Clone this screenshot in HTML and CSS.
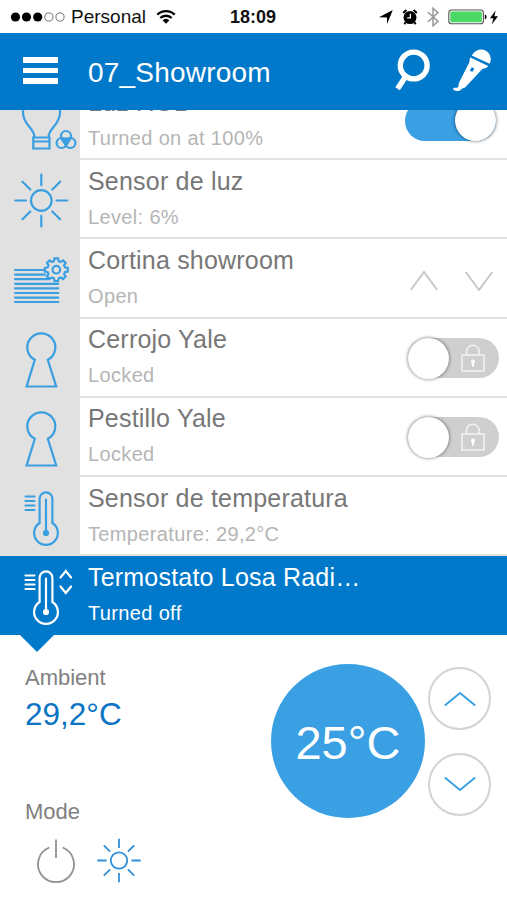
FILE: index.html
```html
<!DOCTYPE html>
<html lang="es">

<head>
  <meta charset="UTF-8">
  <meta name="viewport" content="width=device-width, initial-scale=1.0">
  <title>07_Showroom</title>
  <link rel="stylesheet" href="styles.css">
</head>

<body>
  <div class="status-bar">
    <div class="carrier">
      <svg class="signal" width="56" height="12" viewBox="0 0 56 12">
        <circle cx="5.5" cy="6" r="4.6" />
        <circle cx="16.5" cy="6" r="4.6" />
        <circle cx="27.7" cy="6" r="4.6" />
        <circle class="empty" cx="38.9" cy="6" r="4.1" />
        <circle class="empty" cx="50" cy="6" r="4.1" />
      </svg>
      <span class="carrier-name">Personal</span>
      <svg class="wifi" width="20" height="16" viewBox="0 0 20 16">
        <path class="arc" d="M1.3 5.6a12.6 12.6 0 0 1 17.4 0M4.3 9a8.3 8.3 0 0 1 11.4 0" />
        <path d="M6.6 11.3a5 5 0 0 1 6.8 0L10 14.8z" />
      </svg>
    </div>
    <span class="clock">18:09</span>
    <div class="indicators">
      <svg width="14" height="16" viewBox="0 0 14 16"><path d="M0 8.3L13.8 1 8 15V8.6z" /></svg>
      <svg width="16" height="18" viewBox="0 0 16 18">
        <circle cx="8" cy="9.6" r="6.5" />
        <path class="alarm-bells" d="M1.2 5l3.2-3M14.8 5l-3.2-3M3.6 14.5l-1.3 1.6M12.4 14.5l1.3 1.6" />
        <path class="alarm-hands" d="M8.4 5.8v4H5.2" />
      </svg>
      <svg width="12" height="20" viewBox="0 0 12 20"><path class="bluetooth" d="M.8 5l10.2 9.4-5 4.4V1.2l5 4.4L.8 15" /></svg>
      <svg width="39" height="16" viewBox="0 0 39 16">
        <rect class="battery" x=".8" y="1" width="34.6" height="13.8" rx="2.8" />
        <rect class="charge" x="2.3" y="2.5" width="31.6" height="10.8" rx="1.2" />
        <path d="M36.8 5.5c2.3.6 2.3 4.2 0 4.8z" />
      </svg>
      <svg width="8" height="15" viewBox="0 0 8 15"><path d="M5.6.4L0 8.2h3.4L1.8 14.4 8 6.3H4.4z" /></svg>
    </div>
  </div>

  <header class="header">
    <div class="menu">
      <span></span>
      <span></span>
      <span></span>
    </div>
    <h1>07_Showroom</h1>
    <svg class="search" width="40" height="46" viewBox="0 0 40 46">
      <circle cx="20.7" cy="17.5" r="13.4" />
      <path d="M12.8 28.2L4.6 40.8" />
    </svg>
    <svg class="mic" width="40" height="46" viewBox="0 0 40 46">
      <path d="M18.8 7.4C22 1.800 28 .3 32 2.200c5.500 2.600 7.100 8.600 4.700 13.600z" />
      <path fill-rule="evenodd" d="M17.400 9.400L35.200 18c-.8 1.500-3 2.500-5.600 2.700L12.300 39.200c-1 1-2.300.9-3 1.300-1.200.8-1.600 2.600-5.200 2.400C1.800 42.900.2 42 .2 41c0-1.300 1.200-1.500 3-1.300 2 .2 2.300-.8 2.300-2.200 0-1.500.4-2.500 1-3.700L16.500 14c0-1.600.1-3.200.9-4.600zM18.800 19.200l-2 3.400 2.500 1.400 2-3.400z" />
    </svg>
  </header>

  <main>
    <div class="device-list">
      <div class="device">
        <svg class="device-icon" viewBox="0 0 80 79">
          <path d="M33.300 56.500v11h16.200v-11zM33.300 60.500h16.200M34.500 56.500c0-10-11.500-12-11.500-25a18.500 18.500 0 0 1 37 0c0 13-11.500 15-11.500 25" />
          <circle cx="66" cy="55" r="5" />
          <circle cx="61.600" cy="62" r="5" />
          <circle cx="70.400" cy="62" r="5" />
          <path class="solid" d="M61.500 57.500h9L66 64.500z" />
        </svg>
        <div class="device-body">
          <div class="device-text">
            <div class="name">Luz RGB</div>
            <div class="state">Turned on at 100%</div>
          </div>
          <div class="toggle on"><span class="knob"></span></div>
        </div>
      </div>

      <div class="device">
        <svg class="device-icon" viewBox="0 0 80 79">
          <circle cx="41.300" cy="40.500" r="10.300" />
          <path d="M41.300 14.500v10.700M41.300 55.800V66.500M15.300 40.500H26M56.600 40.500h10.700M22.500 21.700l7.800 7.800M60.100 21.700l-7.800 7.800M22.500 59.300l7.800-7.800M60.100 59.300l-7.800-7.800" />
        </svg>
        <div class="device-body">
          <div class="device-text">
            <div class="name">Sensor de luz</div>
            <div class="state">Level: 6%</div>
          </div>
        </div>
      </div>

      <div class="device">
        <svg class="device-icon" viewBox="0 0 80 79">
          <path d="M15 31H44M15 35.600H45M15 40.200H48M15 44.800h43.300M15 49.400h43.300M15 54h43.300M15 58.600h43.300M15 63h43.300" />
          <path d="M54.500 19.300h3.600l.6 2.800 2 .8 2.400-1.500 2.500 2.500-1.500 2.400.8 2 2.800.6v3.600l-2.800.6-.8 2 1.500 2.400-2.500 2.500-2.400-1.500-2 .8-.6 2.800h-3.600l-.6-2.800-2-.8-2.400 1.500-2.500-2.500 1.500-2.400-.8-2-2.800-.6v-3.600l2.800-.6.8-2-1.500-2.400 2.500-2.500 2.400 1.500 2-.8z" />
          <circle cx="56.300" cy="30.700" r="3.800" />
        </svg>
        <div class="device-body">
          <div class="device-text">
            <div class="name">Cortina showroom</div>
            <div class="state">Open</div>
          </div>
          <div class="blinds">
            <svg width="28" height="20" viewBox="0 0 28 20"><path d="M.7 19L14 1l13.300 18" /></svg>
            <svg width="28" height="20" viewBox="0 0 28 20"><path d="M.7 1L14 19 27.300 1" /></svg>
          </div>
        </div>
      </div>

      <div class="device">
        <svg class="device-icon" viewBox="0 0 80 79">
          <path d="M34.800 40.800a14 14 0 1 1 13 0l8.400 26.700H26.600z" />
        </svg>
        <div class="device-body">
          <div class="device-text">
            <div class="name">Cerrojo Yale</div>
            <div class="state">Locked</div>
          </div>
          <div class="toggle">
            <span class="knob"></span>
            <svg class="lock" width="24" height="28" viewBox="0 0 24 28">
              <path d="M1 11h22v16H1zM5.500 11V7.500a6.300 6.300 0 0 1 12.600 0V11" />
              <path class="keyhole" d="M10 17.500a2 2 0 0 1 4 0c0 1-.7 1.500-.9 2.300l-.3 3h-1.600l-.3-3c-.2-.8-.9-1.300-.9-2.300z" />
            </svg>
          </div>
        </div>
      </div>

      <div class="device">
        <svg class="device-icon" viewBox="0 0 80 79">
          <path d="M34.800 40.800a14 14 0 1 1 13 0l8.400 26.700H26.600z" />
        </svg>
        <div class="device-body">
          <div class="device-text">
            <div class="name">Pestillo Yale</div>
            <div class="state">Locked</div>
          </div>
          <div class="toggle">
            <span class="knob"></span>
            <svg class="lock" width="24" height="28" viewBox="0 0 24 28">
              <path d="M1 11h22v16H1zM5.500 11V7.500a6.300 6.300 0 0 1 12.600 0V11" />
              <path class="keyhole" d="M10 17.500a2 2 0 0 1 4 0c0 1-.7 1.500-.9 2.300l-.3 3h-1.600l-.3-3c-.2-.8-.9-1.300-.9-2.300z" />
            </svg>
          </div>
        </div>
      </div>

      <div class="device">
        <svg class="device-icon" viewBox="0 0 80 79">
          <path d="M39.600 46V21.800a6.400 6.400 0 0 1 12.800 0V46a11.900 11.900 0 1 1-12.800 0zM46 22.500V56M25.500 19.500h9M25.500 24h9M25.500 28.500h9M25.500 33h9" />
          <circle class="solid" cx="46" cy="56" r="2" />
        </svg>
        <div class="device-body">
          <div class="device-text">
            <div class="name">Sensor de temperatura</div>
            <div class="state">Temperature: 29,2°C</div>
          </div>
        </div>
      </div>

      <div class="device selected">
        <svg class="device-icon" viewBox="0 0 80 79">
          <path d="M39.600 46V21.800a6.400 6.400 0 0 1 12.800 0V46a11.900 11.900 0 1 1-12.800 0zM46 22.500V56M25.500 19.500h9M25.500 24h9M25.500 28.500h9M25.500 33h9M60.500 21.500l5.300-6.500 5.300 6.500M60.500 30.500l5.300 6.500 5.300-6.500" />
          <circle class="solid" cx="46" cy="56" r="2" />
        </svg>
        <div class="device-body">
          <div class="device-text">
            <div class="name">Termostato Losa Radi…</div>
            <div class="state">Turned off</div>
          </div>
        </div>
      </div>
    </div>

    <section class="thermostat">
      <div class="readings">
        <div class="label">Ambient</div>
        <div class="ambient">29,2°C</div>
        <div class="label mode-label">Mode</div>
        <div class="modes">
          <svg class="power" width="40" height="48" viewBox="0 0 40 48">
            <path d="M20 2.500v18.500M13.300 10.500a18 18 0 1 0 13.400 0" />
          </svg>
          <svg class="heat" width="46" height="48" viewBox="0 0 46 48">
            <circle cx="23" cy="23.500" r="8.200" />
            <path d="M23 1.800v9.200M23 36v9.200M1.300 23.500h9.200M35.500 23.500h9.200M7.800 8.300l6.300 6.300M38.200 8.300l-6.300 6.300M7.800 38.700l6.300-6.300M38.200 38.700l-6.300-6.300" />
          </svg>
        </div>
      </div>
      <div class="setpoint">25°C</div>
      <div class="steps">
        <button class="step"><svg width="32" height="16" viewBox="0 0 32 16"><path d="M.8 14.500L16 2l15.200 12.500" /></svg></button>
        <button class="step"><svg width="32" height="16" viewBox="0 0 32 16"><path d="M.8 1.500L16 14 31.200 1.500" /></svg></button>
      </div>
    </section>
  </main>
</body>
</html>
```

FILE: styles.css
```css
* {
  box-sizing: border-box;
}

body {
  width: 507px;
  height: 900px;
  margin: 0;
  overflow: hidden;
  background-color: #fff;
  font-family: "Liberation Sans", Arial, sans-serif;
}

svg {
  display: block;
  flex: none;
}

/* status bar */
.status-bar {
  display: grid;
  grid-template-columns: 230px 1fr auto;
  align-items: center;
  height: 33px;
  padding: 1px 9px 0 0;
  color: #111;
}

.carrier {
  display: flex;
  align-items: center;
  padding-left: 10px;
}

.signal .empty {
  fill: none;
  stroke: #777;
}

.carrier-name {
  margin-left: 5px;
  font-size: 19px;
}

.wifi {
  margin-left: 10px;
}

.wifi .arc {
  fill: none;
  stroke: #000;
  stroke-width: 2.4;
}

.clock {
  font-size: 18px;
  font-weight: bold;
}

.indicators {
  display: flex;
  align-items: center;
}

.indicators svg {
  margin-left: 9px;
}

.indicators svg:last-child {
  margin-left: 3px;
}

.alarm-bells {
  stroke: #000;
  stroke-width: 2;
}

.alarm-hands {
  fill: none;
  stroke: #fff;
  stroke-width: 1.3;
}

.bluetooth {
  fill: none;
  stroke: #999;
  stroke-width: 1.5;
}

.battery {
  fill: #fff;
  stroke: #555;
  stroke-width: 1.1;
}

.charge {
  fill: #4cd864;
}

/* header */
.header {
  display: flex;
  align-items: center;
  height: 77px;
  padding: 0 14px 0 23px;
  background-color: #0079ca;
  color: #fff;
}

.menu {
  display: flex;
  flex-direction: column;
  gap: 5px;
  width: 35px;
  margin-top: -2px;
}

.menu span {
  height: 5.5px;
  background-color: #fff;
}

.header h1 {
  flex: 1;
  margin: 2px 0 0 30px;
  font-size: 28px;
  font-weight: normal;
  letter-spacing: 0.2px;
}

.search {
  margin-right: 20px;
  fill: none;
  stroke: #fff;
  stroke-width: 5.4;
}

.mic {
  fill: #fff;
}

.search,
.mic {
  margin-top: -1px;
}

/* devices */
.device-list {
  display: flex;
  flex-direction: column;
  justify-content: flex-end;
  height: 525.4px;
  overflow: hidden;
}

.device {
  display: flex;
  flex: none;
  height: 79.2px;
  background-color: #e1e1e1;
}

.device-icon {
  width: 80px;
  height: 79px;
  fill: none;
  stroke: #3a9fe0;
  stroke-width: 2.2;
  stroke-linecap: round;
}

.device-icon .solid {
  fill: #3a9fe0;
}

.device-body {
  display: flex;
  flex: 1;
  align-items: center;
  padding-left: 8px;
  border-bottom: 2px solid #e1e1e1;
  background-color: #fff;
}

.device-text {
  flex: 1;
  align-self: flex-start;
  padding-top: 5.6px;
  white-space: nowrap;
}

.name {
  color: #777;
  font-size: 25px;
  line-height: 30px;
  letter-spacing: 0.2px;
}

.state {
  margin-top: 8px;
  color: #b5b5b5;
  font-size: 20px;
  line-height: 26px;
  letter-spacing: 0.35px;
}

.selected,
.selected .device-body {
  border-color: #0079ca;
  background-color: #0079ca;
}

.selected .name,
.selected .state {
  color: #fff;
}

.selected .device-icon {
  stroke: #fff;
}

.selected .solid {
  fill: #fff;
}

.toggle {
  display: flex;
  align-items: center;
  width: 91px;
  height: 40px;
  margin: 2px 8px 0 0;
  border-radius: 20px;
  background-color: #cfcfcf;
}

.toggle.on {
  justify-content: flex-end;
  margin-right: 11px;
  background-color: #3a9fe3;
}

.knob {
  flex: none;
  width: 41px;
  height: 41px;
  border-radius: 50%;
  background-color: #fff;
  box-shadow: 0 0 3px 1px rgba(0, 0, 0, 0.35);
}

.lock {
  margin: 0 0 1px 12px;
  fill: none;
  stroke: #f3f3f3;
  stroke-width: 1.5;
}

.lock .keyhole {
  fill: #fff;
  stroke: none;
}

.blinds {
  display: flex;
  gap: 27px;
  margin: 5px 14px 0 0;
  fill: none;
  stroke: #c4c4c4;
  stroke-width: 1.8;
}

/* thermostat panel */
.thermostat {
  position: relative;
  display: flex;
  height: 264.6px;
  padding: 0.6px 0 0 25px;
}

/* pointer under the selected device */
.thermostat::before {
  content: "";
  position: absolute;
  top: 0;
  left: 20px;
  border: 17.5px solid transparent;
  border-top-color: #0079ca;
  border-bottom: none;
}

.readings {
  width: 246px;
  padding-top: 29px;
}

.label {
  color: #808080;
  font-size: 22px;
  line-height: 26px;
}

.ambient {
  margin-top: 5px;
  color: #0b74c4;
  font-size: 31.5px;
  line-height: 36px;
}

.mode-label {
  margin-top: 67px;
}

.modes {
  display: flex;
  gap: 20px;
  margin: 12px 0 0 11px;
  fill: none;
}

.power {
  stroke: #929292;
  stroke-width: 1.8;
}

.heat {
  stroke: #2f8fd8;
  stroke-width: 1.8;
}

.setpoint {
  width: 154px;
  height: 154px;
  margin-top: 28px;
  border-radius: 50%;
  background-color: #3a9fe3;
  color: #fff;
  font-size: 47px;
  line-height: 158px;
  text-align: center;
}

.steps {
  display: flex;
  flex-direction: column;
  gap: 22.5px;
  margin: 31.5px 0 0 3px;
}

.step {
  display: flex;
  align-items: center;
  justify-content: center;
  width: 63px;
  height: 63px;
  padding: 0;
  border: 2px solid #d3d3d3;
  border-radius: 50%;
  background-color: #fff;
  fill: none;
  stroke: #3a9fe3;
  stroke-width: 2;
}
```
